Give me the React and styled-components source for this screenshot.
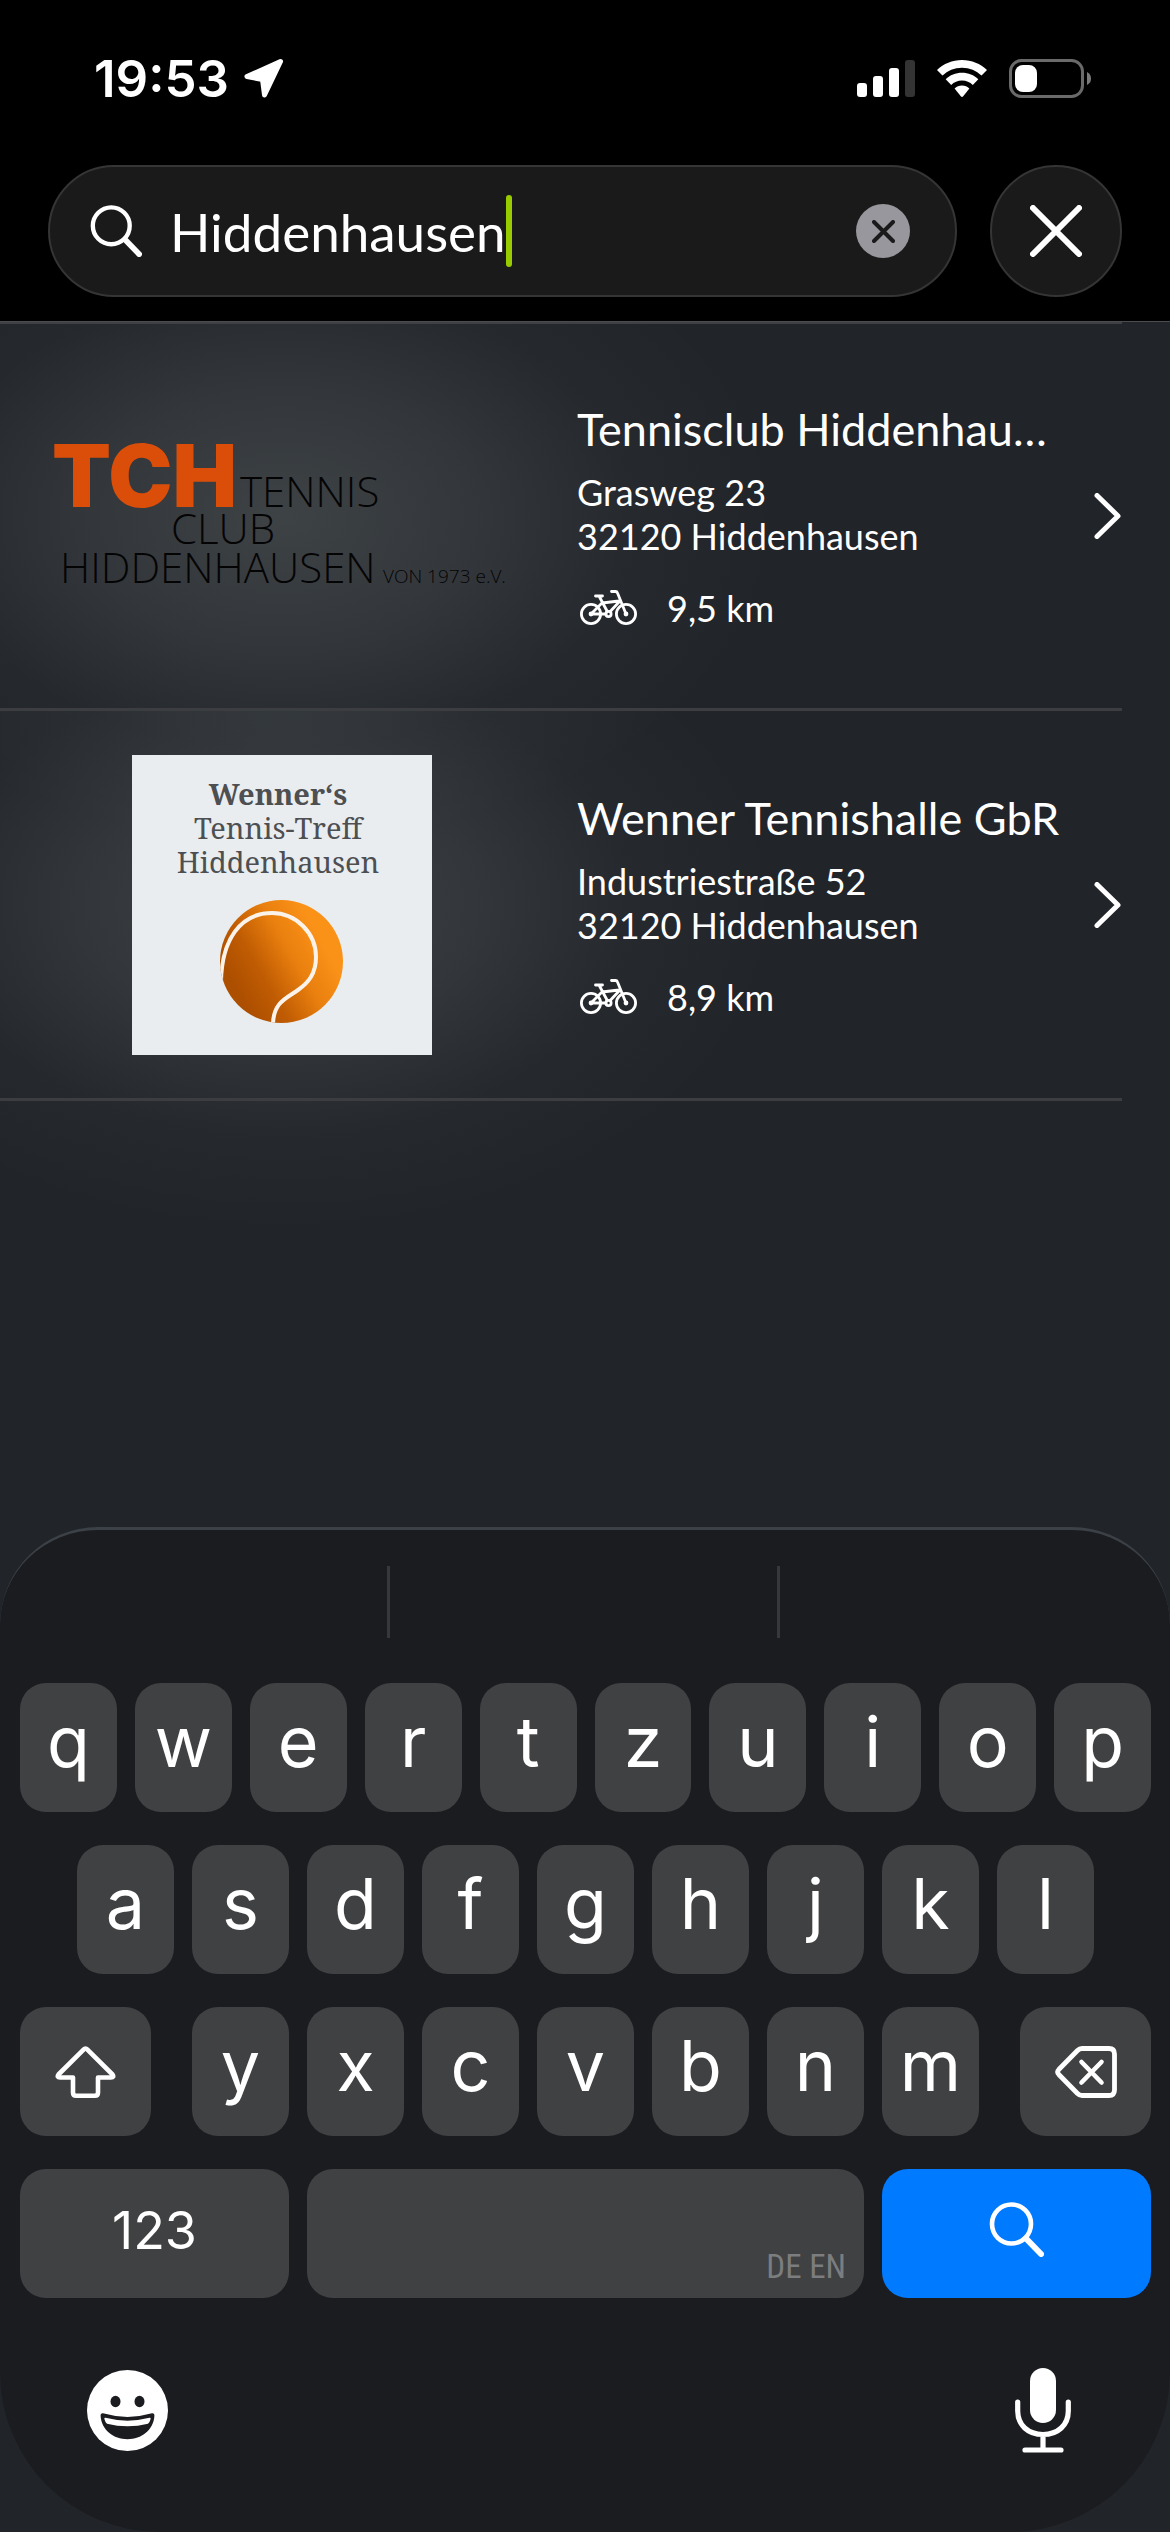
import { useState } from 'react';
import styled, { createGlobalStyle } from 'styled-components';

const GlobalStyle = createGlobalStyle`
  * {
    box-sizing: border-box;
    margin: 0;
    padding: 0;
  }

  body {
    background-color: #212429;
    color: #fff;
    font-family: Lato, 'Liberation Sans', sans-serif;
  }

  button {
    border: none;
    background: none;
    color: inherit;
    font: inherit;
    cursor: pointer;
  }

  svg {
    display: block;
    flex: none;
  }
`;

const Page = styled.div`
  min-height: 100vh;
  display: flex;
  flex-direction: column;
`;

const Header = styled.header`
  background-color: #000;
  padding-bottom: 24px;
`;

const StatusBar = styled.div`
  height: 156px;
  padding: 0 78px 0 94px;
  display: flex;
  align-items: center;
  justify-content: space-between;
`;

const StatusGroup = styled.div`
  display: flex;
  align-items: center;
  gap: ${(props) => props.$gap}px;
`;

const Time = styled.time`
  font-family: Inter, sans-serif;
  font-size: 51px;
  font-weight: 600;
`;

const SearchRow = styled.form`
  margin-top: 9px;
  padding: 0 48px;
  display: flex;
  gap: 33px;
`;

const SearchField = styled.label`
  flex: 1;
  min-width: 0;
  height: 132px;
  padding: 0 45px 0 40px;
  display: flex;
  align-items: center;
  background-color: #1a1a1a;
  border: 2px solid #353535;
  border-radius: 66px;
`;

const SearchInput = styled.input`
  field-sizing: content;
  min-width: 20px;
  margin-left: 28px;
  border: none;
  outline: none;
  background: none;
  color: #fff;
  caret-color: transparent;
  font-family: inherit;
  font-size: 53px;
`;

const Caret = styled.span`
  flex: none;
  width: 6px;
  height: 72px;
  border-radius: 3px;
  background-color: #99cc00;
`;

const ClearButton = styled.button`
  flex: none;
  width: 54px;
  height: 54px;
  margin-left: auto;
  display: grid;
  place-items: center;
  border-radius: 50%;
  background-color: #98979d;
`;

const CloseButton = styled.button`
  flex: none;
  width: 132px;
  height: 132px;
  display: grid;
  place-items: center;
  border: 2px solid #353535;
  border-radius: 50%;
  background-color: #1a1a1a;
`;

const Results = styled.ul`
  position: relative;
  z-index: 0;
  list-style: none;
  border-top: 1px solid #4b4c50;
`;

const Result = styled.li`
  position: relative;
  height: 390px;
  margin-right: 48px;
  border-bottom: 3px solid #3b3d41;

  &:first-child {
    height: 389px;
    border-top: 2px solid #3f4044;
  }

  /* soft light behind each club logo, spills into the neighbours */
  &::before {
    content: '';
    position: absolute;
    z-index: -1;
    inset: 0 0 -140px 0;
    background: radial-gradient(
      ellipse 500px 330px at 282px 193px,
      rgba(225, 240, 232, 0.15),
      rgba(225, 240, 232, 0.09) 40%,
      rgba(225, 240, 232, 0.025) 70%,
      rgba(225, 240, 232, 0)
    );
  }
`;

const ResultLink = styled.a`
  height: 100%;
  display: grid;
  grid-template-columns: minmax(0, 564fr) minmax(0, 504fr) 28px;
  column-gap: 13px;
  align-items: center;
  color: inherit;
  text-decoration: none;
`;

const Thumb = styled.div`
  display: flex;
  justify-content: center;
`;

const ClubInfo = styled.div`
  padding-right: 16px;
`;

const ClubName = styled.h2`
  font-size: 45px;
  font-weight: 400;
  line-height: 54px;
  white-space: nowrap;
  overflow: hidden;
  text-overflow: ellipsis;
`;

const Address = styled.address`
  margin: 14px 0 28px;
  font-size: 36px;
  font-style: normal;
  line-height: 44px;
`;

const Distance = styled.p`
  padding-left: 3px;
  display: flex;
  align-items: center;
  gap: 30px;
  font-size: 36px;
  line-height: 44px;
`;

const Keyboard = styled.section`
  margin-top: auto;
  background-color: #1b1c20;
  border-top: 3px solid #3b4147;
  border-radius: 98px 98px 160px 160px;
  font-family: Inter, 'Liberation Sans', sans-serif;
`;

const Suggestions = styled.div`
  padding: 36px 0 45px;
  display: grid;
  grid-template-columns: repeat(3, 1fr);
`;

const Suggestion = styled.div`
  height: 72px;

  &:not(:last-child) {
    border-right: 3px solid #38383c;
  }
`;

const Keys = styled.div`
  padding: 0 19px 0 20px;
  display: flex;
  flex-direction: column;
  gap: 33px;
`;

const KeyRow = styled.div`
  display: flex;
  justify-content: space-between;
  gap: ${(props) => props.$gap || 18}px;
  padding: 0 ${(props) => props.$inset || 0}px;
`;

const LetterGroup = styled.div`
  flex: 1;
  display: flex;
  gap: 18px;
`;

const Key = styled.button`
  flex: ${(props) => (props.$width ? `0 0 ${props.$width}px` : '1 1 0')};
  min-width: 0;
  height: 129px;
  padding-bottom: ${(props) => props.$lift || 0}px;
  display: flex;
  align-items: center;
  justify-content: center;
  border-radius: 26px;
  background-color: ${(props) => (props.$primary ? '#007aff' : '#404143')};
  font-size: ${(props) => (props.$small ? 52 : 70)}px;
`;

const SpaceKey = styled(Key)`
  align-items: flex-end;
  justify-content: flex-end;
  padding: 0 18px 12px;
  color: #7c7d7f;
  font-family: 'Roboto Condensed', 'Liberation Sans Narrow', 'Open Sans Condensed', sans-serif;
  font-size: 33px;
`;

const KeyboardFooter = styled.div`
  height: 234px;
  padding: 0 99px 9px 87px;
  display: flex;
  align-items: center;
  justify-content: space-between;
`;

function SearchIcon({ size = 55 }) {
  return (
    <svg width={size} height={size} viewBox="0 0 55 55" fill="none" stroke="#fff" strokeLinecap="round">
      <circle cx="22.5" cy="22" r="19.5" strokeWidth="4.6" />
      <path d="M37 36.5 52 52" strokeWidth="6" />
    </svg>
  );
}

function CrossIcon({ size, color, stroke }) {
  const far = size - stroke / 2;
  const near = stroke / 2;
  return (
    <svg width={size} height={size} fill="none" stroke={color} strokeWidth={stroke} strokeLinecap="round">
      <path d={`M${near} ${near} ${far} ${far}M${far} ${near} ${near} ${far}`} />
    </svg>
  );
}

function LocationIcon() {
  return (
    <svg width="40" height="40" viewBox="0 0 40 40" fill="#fff" stroke="#fff" strokeWidth="5" strokeLinejoin="round">
      <path d="M36.5 3.5 3 18.5 18.500 21.500 20.5 37Z" />
    </svg>
  );
}

function SignalIcon() {
  return (
    <svg width="58" height="37" viewBox="0 0 58 37" fill="#fff">
      <rect x="0" y="23" width="10" height="14" rx="3" />
      <rect x="16" y="16" width="10" height="21" rx="3" />
      <rect x="32" y="8" width="10" height="29" rx="3" />
      <rect x="48" y="0" width="10" height="37" rx="3" fill="#343434" />
    </svg>
  );
}

function WifiIcon() {
  return (
    <svg width="50" height="37" viewBox="0 0 50 37" fill="#fff">
      <path d="M25 0C34.700 0 43.500 3.800 50 10L44.500 15.600C39.400 10.700 32.500 7.700 25 7.700S10.600 10.700 5.500 15.600L0 10C6.500 3.800 15.300 0 25 0Z" />
      <path d="M25 12.800C31.300 12.800 37 15.200 41.300 19.200L35.800 24.900C33 22.200 29.200 20.500 25 20.500S17 22.200 14.200 24.900L8.700 19.200C13 15.200 18.700 12.800 25 12.800Z" />
      <path d="M25 25.600C27.900 25.600 30.500 26.700 32.400 28.500L26.200 36.300Q25 37.600 23.800 36.300L17.600 28.500C19.500 26.700 22.100 25.600 25 25.600Z" />
    </svg>
  );
}

function BatteryIcon() {
  return (
    <svg width="83" height="39" viewBox="0 0 83 39">
      <rect x="1.500" y="1.500" width="72" height="36" rx="11" fill="none" stroke="#6a6a6a" strokeWidth="3" />
      <rect x="6" y="6" width="22" height="27" rx="8" fill="#fff" />
      <path d="M78 13Q82 15 82 19.500T78 26Z" fill="#7a7a7a" />
    </svg>
  );
}

function BikeIcon() {
  return (
    <svg
      width="57"
      height="36"
      viewBox="0 0 57 36"
      fill="none"
      stroke="#fff"
      strokeWidth="2.800"
      strokeLinecap="round"
      strokeLinejoin="round"
    >
      <circle cx="11" cy="24" r="9.600" />
      <circle cx="46" cy="24" r="9.600" />
      <circle cx="28.500" cy="24" r="2.600" />
      <circle cx="11" cy="24" r="1" />
      <circle cx="46" cy="24" r="1" />
      <path d="M15.500 6H22.500M19 6 27.300 21.500M22 13 39 11M22 13 11 24H26M30.200 21.500 39.500 11.500M31.500 1.500H35.500Q37 1.500 37.500 3L46 24" />
    </svg>
  );
}

function ChevronIcon() {
  return (
    <svg width="28" height="46" viewBox="0 0 28 46" fill="none" stroke="#fff" strokeWidth="5" strokeLinecap="round" strokeLinejoin="round">
      <path d="M3 2.500 24 23 3 43.500" />
    </svg>
  );
}

function ShiftIcon() {
  return (
    <svg width="61" height="52" viewBox="0 0 61 52" fill="none" stroke="#fff" strokeWidth="4.600" strokeLinejoin="round">
      <path d="M28.800 3.400Q30.500 1.500 32.200 3.400L57.500 28.500Q59.500 31.500 56 31.500H43V46.500Q43 49.700 39.800 49.700H21.200Q18 49.700 18 46.500V31.500H5Q1.500 31.500 3.500 28.500Z" />
    </svg>
  );
}

function DeleteIcon() {
  return (
    <svg width="62" height="52" viewBox="0 0 62 52" fill="none" stroke="#fff" strokeLinecap="round" strokeLinejoin="round">
      <path d="M27 2.500H54Q59.500 2.500 59.500 8V44Q59.500 49.500 54 49.500H27Q24.500 49.500 22.500 47.500L3.800 28.500Q1.500 26 3.800 23.500L22.500 4.500Q24.500 2.500 27 2.500Z" strokeWidth="4.800" />
      <path d="M26.500 16 46.500 36.500M46.500 16 26.500 36.500" strokeWidth="4.600" />
    </svg>
  );
}

function EmojiIcon() {
  return (
    <svg width="81" height="81" viewBox="0 0 81 81">
      <circle cx="40.500" cy="40.500" r="40.500" fill="#fff" />
      <ellipse cx="28.500" cy="31.500" rx="5" ry="5.800" fill="#1b1c20" />
      <ellipse cx="52.500" cy="31.500" rx="5" ry="5.800" fill="#1b1c20" />
      <path d="M16 43.300Q40.500 50.500 65 43.300Q67.600 43 67.400 46C66.500 60 54.500 69.200 40.500 69.200S14.500 60 13.600 46Q13.400 43 16 43.300Z" fill="#1b1c20" />
      <path d="M18.500 47.800Q40.500 53.500 62.500 47.800Q64 47.600 63.600 49Q62.800 52.500 61 53.700Q40.500 59 20 53.700Q18.200 52.500 17.400 49Q17 47.600 18.500 47.800Z" fill="#fff" />
    </svg>
  );
}

function MicIcon() {
  return (
    <svg width="56" height="85" viewBox="0 0 56 85" fill="none" stroke="#fff" strokeWidth="5.200" strokeLinecap="round">
      <rect x="15" y="0" width="26" height="55" rx="13" fill="#fff" stroke="none" />
      <path d="M2.700 34V43C2.700 57 13 66.500 28 66.500S53.300 57 53.300 43V34M28 67V81M10 82H46" />
    </svg>
  );
}

function TchLogo() {
  return (
    <svg width="454" height="140" viewBox="0 0 454 140" overflow="visible" role="img" aria-label="TCH Tennis Club Hiddenhausen von 1973 e.V.">
      <text x="-3" y="61" fill="#da4e09" fontFamily="Inter, sans-serif" fontSize="86" fontWeight="900">
        TCH
      </text>
      <g fill="#050405" fontFamily="'Open Sans', 'Noto Sans', sans-serif" fontWeight="300" fontSize="42">
        <text x="185" y="61">TENNIS</text>
        <text x="116" y="98">CLUB</text>
        <text x="5" y="137">HIDDENHAUSEN</text>
        <text x="328" y="137" fontSize="19">VON 1973 e.V.</text>
      </g>
    </svg>
  );
}

function WennerLogo() {
  return (
    <svg width="300" height="300" viewBox="0 0 300 300" role="img" aria-label="Wenner‘s Tennis-Treff Hiddenhausen">
      <defs>
        <linearGradient id="ball" x1="0.15" y1="0.750" x2="0.850" y2="0.350">
          <stop offset="0" stopColor="#ad4f00" />
          <stop offset="0.300" stopColor="#c05c03" />
          <stop offset="0.650" stopColor="#e97f0e" />
          <stop offset="1" stopColor="#fb9218" />
        </linearGradient>
        <clipPath id="ballEdge">
          <circle cx="149.500" cy="206.500" r="61.500" />
        </clipPath>
      </defs>
      <rect width="300" height="300" fill="#e9edf0" />
      <g fill="#4d4f52" fontFamily="'Noto Serif', 'DejaVu Serif', serif" fontSize="29" textAnchor="middle">
        <text x="146" y="50" fontWeight="700">Wenner‘s</text>
        <text x="146" y="84">Tennis-Treff</text>
        <text x="146" y="118">Hiddenhausen</text>
      </g>
      <circle cx="149.500" cy="206.500" r="61.500" fill="url(#ball)" />
      <path
        d="M89 226C90 185 108 158 140 158C164 158 184 178 184 202C184 219 176 228 166 235C155 243 141 247 141 270"
        fill="none"
        stroke="#fbf3ea"
        strokeWidth="4"
        clipPath="url(#ballEdge)"
      />
    </svg>
  );
}

const clubs = [
  {
    name: 'Tennisclub Hiddenhausen e.V.',
    street: 'Grasweg 23',
    city: '32120 Hiddenhausen',
    distance: '9,5 km',
    logo: <TchLogo />,
  },
  {
    name: 'Wenner Tennishalle GbR',
    street: 'Industriestraße 52',
    city: '32120 Hiddenhausen',
    distance: '8,9 km',
    logo: <WennerLogo />,
  },
];

function Letters({ letters }) {
  return letters.split('').map((letter) => (
    <Key key={letter} type="button" $lift={12}>
      {letter}
    </Key>
  ));
}

function App() {
  const [query, setQuery] = useState('Hiddenhausen');

  return (
    <Page>
      <GlobalStyle />
      <Header>
        <StatusBar>
          <StatusGroup $gap={15}>
            <Time>19:53</Time>
            <LocationIcon />
          </StatusGroup>
          <StatusGroup $gap={22}>
            <SignalIcon />
            <WifiIcon />
            <BatteryIcon />
          </StatusGroup>
        </StatusBar>
        <SearchRow onSubmit={(e) => e.preventDefault()}>
          <SearchField>
            <SearchIcon size={52} />
            <SearchInput
              type="text"
              aria-label="Suche"
              value={query}
              onChange={(e) => setQuery(e.target.value)}
            />
            <Caret />
            <ClearButton type="button" aria-label="Eingabe löschen" onClick={() => setQuery('')}>
              <CrossIcon size={23} color="#1a1a1a" stroke={4} />
            </ClearButton>
          </SearchField>
          <CloseButton type="button" aria-label="Schließen">
            <CrossIcon size={52} color="#fff" stroke={6} />
          </CloseButton>
        </SearchRow>
      </Header>

      <Results>
        {clubs.map((club) => (
          <Result key={club.name}>
            <ResultLink href="#">
              <Thumb>{club.logo}</Thumb>
              <ClubInfo>
                <ClubName>{club.name}</ClubName>
                <Address>
                  {club.street}
                  <br />
                  {club.city}
                </Address>
                <Distance>
                  <BikeIcon />
                  {club.distance}
                </Distance>
              </ClubInfo>
              <ChevronIcon />
            </ResultLink>
          </Result>
        ))}
      </Results>

      <Keyboard>
        <Suggestions>
          <Suggestion />
          <Suggestion />
          <Suggestion />
        </Suggestions>
        <Keys>
          <KeyRow>
            <Letters letters="qwertzuiop" />
          </KeyRow>
          <KeyRow $inset={57}>
            <Letters letters="asdfghjkl" />
          </KeyRow>
          <KeyRow $gap={41}>
            <Key type="button" aria-label="Umschalt" $width={131}>
              <ShiftIcon />
            </Key>
            <LetterGroup>
              <Letters letters="yxcvbnm" />
            </LetterGroup>
            <Key type="button" aria-label="Löschen" $width={131}>
              <DeleteIcon />
            </Key>
          </KeyRow>
          <KeyRow>
            <Key type="button" $width={269} $small $lift={6}>
              123
            </Key>
            <SpaceKey type="button">DE EN</SpaceKey>
            <Key type="button" aria-label="Suchen" $width={269} $primary $lift={9}>
              <SearchIcon />
            </Key>
          </KeyRow>
        </Keys>
        <KeyboardFooter>
          <button type="button" aria-label="Emoji">
            <EmojiIcon />
          </button>
          <button type="button" aria-label="Diktieren">
            <MicIcon />
          </button>
        </KeyboardFooter>
      </Keyboard>
    </Page>
  );
}

export default App;
